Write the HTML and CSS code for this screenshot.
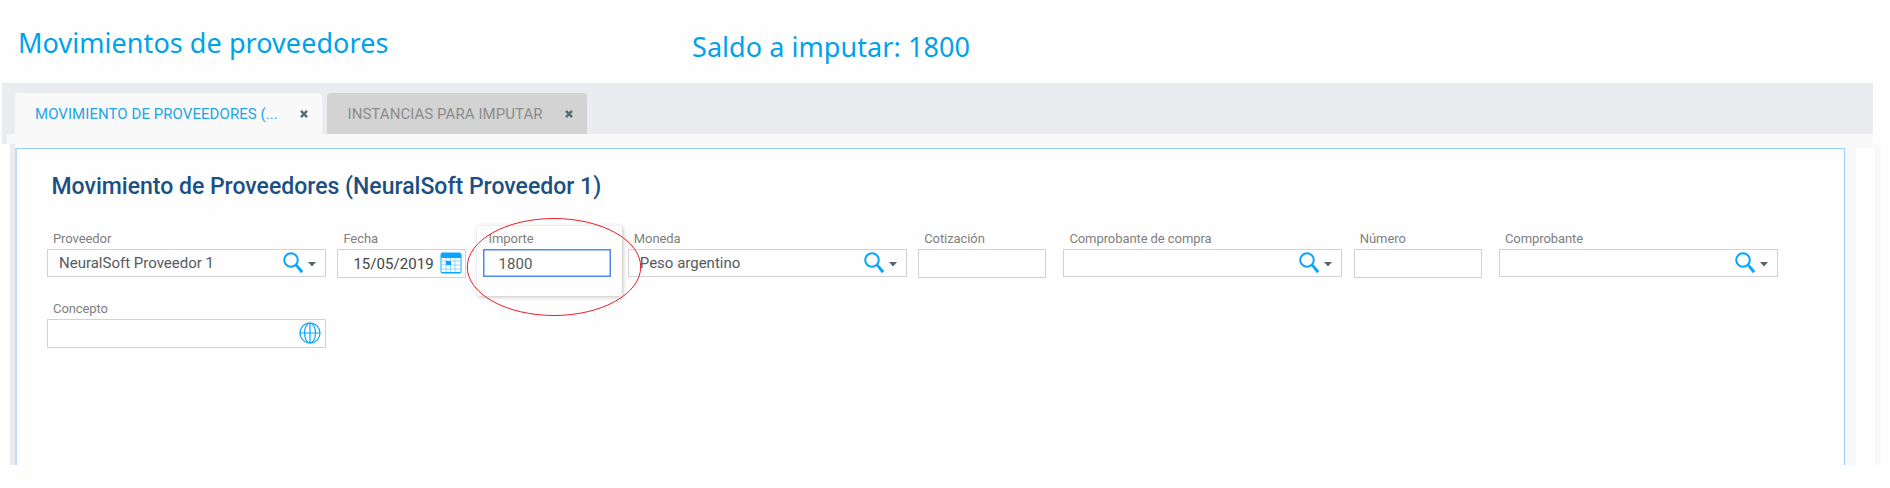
FILE: index.html
```html
<!DOCTYPE html>
<html lang="es">
<head>
<meta charset="utf-8">
<title>Movimientos de proveedores</title>
<link rel="stylesheet" href="styles.css">
</head>
<body>
<svg class="defs" width="0" height="0">
  <symbol id="search" viewBox="0 0 20 22"><circle cx="8" cy="8" r="6.8" fill="none" stroke="#0aa5ff" stroke-width="2"/><path d="M11.8 13.2 13.6 11.5 20.2 19 17.9 21.2Z" fill="#0aa5ff"/></symbol>
  <symbol id="cross" viewBox="0 0 8 8"><path d="M1 .9 7 7.1M7 .9 1 7.1" stroke="#566f79" stroke-width="2.5"/></symbol>
  <symbol id="caret" viewBox="0 0 8 5"><path d="M0 0H8L4 4.6Z" fill="#56646f"/></symbol>
</svg>
<header class="top">
  <h1 class="top-title">Movimientos de proveedores</h1>
  <p class="balance">Saldo a imputar: 1800</p>
</header>
<nav class="tabs">
  <div class="tab active"><span>MOVIMIENTO DE PROVEEDORES (...</span><svg class="x"><use href="#cross"/></svg></div>
  <div class="tab"><span>INSTANCIAS PARA IMPUTAR</span><svg class="x"><use href="#cross"/></svg></div>
</nav>
<div class="strip"><i class="strip-edge"></i><i class="strip-fill"></i></div>
<main class="body">
  <section class="panel">
    <h2 class="title">Movimiento de Proveedores (NeuralSoft Proveedor 1)</h2>
    <div class="grid">
      <div class="field wide"><label>Proveedor</label><div class="input"><span class="value">NeuralSoft Proveedor 1</span><svg class="search"><use href="#search"/></svg><svg class="caret"><use href="#caret"/></svg></div></div>
      <div class="field"><label>Fecha</label><div class="input date"><span class="value">15/05/2019</span>
        <svg class="cal" viewBox="0 0 22 22"><path d="M3 .5H19Q21.5.5 21.5 3V19Q21.5 21.5 19 21.5H3Q.5 21.5.5 19V3Q.5.5 3 .5Z" fill="#0aa5ff"/><path d="M1.5 6H20.5V20H1.5Z" fill="#fff"/><path d="M6 6V20M10.5 6V20M15 6V20M1.5 9H20.5M1.5 13H20.5M1.5 17H20.5" stroke="#8ad3ff" stroke-width=".9"/><path d="M6 9H11V13H6Z" fill="#0aa5ff"/></svg></div></div>
      <div class="field focus"><label>Importe</label><div class="input amount"><span class="value">1800</span></div>
        <svg class="mark" viewBox="0 0 176 100"><ellipse cx="88" cy="50" rx="86.7" ry="48.5" fill="none" stroke="#ed1c24" stroke-width="1"/></svg></div>
      <div class="field wide"><label>Moneda</label><div class="input"><span class="value">Peso argentino</span><svg class="search"><use href="#search"/></svg><svg class="caret"><use href="#caret"/></svg></div></div>
      <div class="field"><label>Cotización</label><div class="input"></div></div>
      <div class="field wide"><label>Comprobante de compra</label><div class="input"><span class="value"></span><svg class="search"><use href="#search"/></svg><svg class="caret"><use href="#caret"/></svg></div></div>
      <div class="field"><label>Número</label><div class="input"></div></div>
      <div class="field wide"><label>Comprobante</label><div class="input"><span class="value"></span><svg class="search"><use href="#search"/></svg><svg class="caret"><use href="#caret"/></svg></div></div>
      <div class="field wide"><label>Concepto</label><div class="input tall"><span class="value"></span>
        <svg class="globe" viewBox="0 0 22 22"><g fill="none" stroke="#0aa5ff" stroke-width="1.2"><circle cx="11" cy="11" r="10"/><ellipse cx="11" cy="11" rx="5.5" ry="10"/><path d="M11 1V21M1 11H21"/></g></svg></div></div>
    </div>
  </section>
  <i class="gutter"></i>
  <i class="edge"></i>
</main>
</body>
</html>
```

FILE: styles.css
```css
* { box-sizing: border-box; }
body { margin: 0; background: #fefefe; font-family: Roboto, sans-serif; height: 488px; overflow: hidden; }
svg { flex: none; display: block; }
.defs { position: absolute; }
.top { height: 83px; display: flex; padding-left: 18px; color: #00a2e8; font-family: "Noto Sans", sans-serif; }
.top-title, .balance { margin: 0; font-size: 27px; font-weight: 400; line-height: 36px; letter-spacing: .06px; white-space: nowrap; }
.top-title { width: 674px; padding-top: 25px; }
.balance { padding-top: 29px; }
.tabs { display: flex; gap: 5px; margin-left: 2px; width: 1871px; height: 51px; padding: 10px 0 0 13px; background: #ebecf0; }
.tab { width: 260px; display: flex; justify-content: space-between; align-items: center; padding: 0 14px 0 20.5px; border-radius: 4px 4px 0 0; background: #d3d3d3; color: #8c8c8c; font-size: 15px; letter-spacing: .06px; white-space: nowrap; }
.tab.active { width: 307px; padding-left: 20px; background: #f9f9f9; color: #1ea5e4; }
.x { width: 8px; height: 8px; }
.strip { height: 10px; display: flex; margin-left: 2px; width: 1871px; }
.strip-edge { width: 5px; background: #ebecf0; }
.strip-fill { flex: 1; background: #f9f9f9; }
.body { display: flex; height: 321px; margin-left: 10px; width: 1871px; border-left: 5px solid #ebecf0; background: linear-gradient(#f9f9f9 4px, transparent 4px); padding-top: 4px; }
.panel { width: 1830px; border: solid #99ccff; border-width: 1px 1px 0 2px; border-left-color: #bbdcff; background: #fefefe; padding: 24px 0 0 30px; }
.gutter { width: 11px; margin-right: 19px; background: #f9f9f9; }
.edge { width: 6px; background: #f9f9f9; }
.title { margin: 0 0 0 4.5px; height: 53px; font-size: 23px; line-height: 28px; font-weight: 500; color: #1b5083; white-space: nowrap; }
.grid { display: grid; width: 1742.4px; grid-template-columns: repeat(12, 1fr); grid-auto-rows: 70px; }
.field { position: relative; padding: 3px 17px 0 0; }
.wide { grid-column: span 2; padding-right: 11.6px; }
label { display: block; height: 20px; padding: 0 6px; font-size: 13px; line-height: 19px; letter-spacing: -.08px; color: #808080; white-space: nowrap; }
.input { display: flex; align-items: center; height: 29px; border: 1px solid #d2d2d2; background: #fefefe; padding: 0 9px 0 11px; }
.wide .input { height: 28px; }
.wide .input.tall { height: 29px; padding-right: 4px; }
.value { flex: 1; font-size: 15px; line-height: 20px; color: #555a5e; white-space: nowrap; }
.search { width: 20px; height: 22px; margin-right: 5px; }
.caret { width: 8px; height: 5px; margin-top: 2px; }
.globe { width: 22px; height: 22px; margin-top: -2px; }
.date { padding: 0 3px 0 15px; }
.date .value { letter-spacing: .05px; color: #444; }
.cal { width: 22px; height: 22px; margin-top: -2px; }
.focus::before { content: ""; position: absolute; left: -5.5px; top: 0; width: 145px; height: 70px; background: #fefefe; border-radius: 3px; box-shadow: 1px 1px 4px rgba(0,0,0,.25); }
.focus label, .focus .input { position: relative; }
.focus .input { height: 28px; border: 1px solid #4d88f5; box-shadow: inset 0 0 0 .5px #4d88f5; }
.amount { padding-left: 15px; }
.amount .value { padding-top: 1px; }
.mark { position: absolute; z-index: 2; left: -17px; top: -9px; width: 176px; height: 100px; }
```
